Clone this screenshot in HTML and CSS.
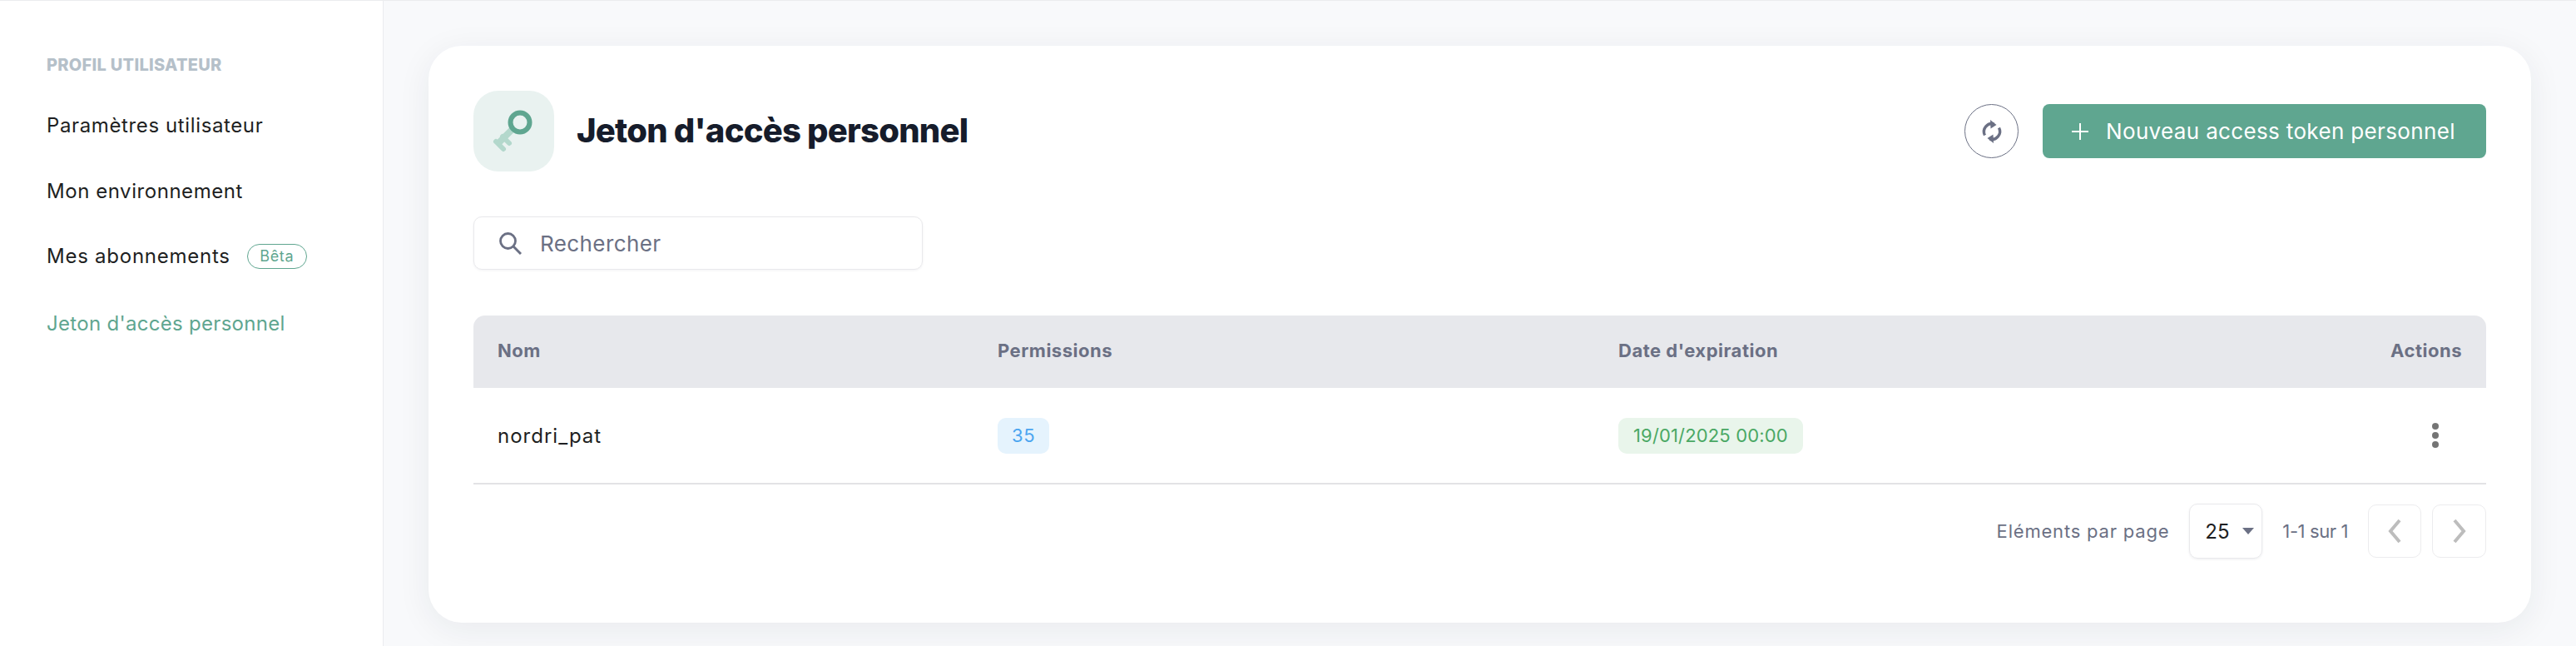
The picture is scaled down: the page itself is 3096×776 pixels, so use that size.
FILE: index.html
```html
<!DOCTYPE html>
<html lang="fr">
<head>
<meta charset="utf-8">
<title>Jeton d'accès personnel</title>
<link rel="stylesheet" href="styles.css">
</head>
<body>
<div class="app">
  <aside class="sidebar">
    <div class="side-title">PROFIL UTILISATEUR</div>
    <nav class="side-nav">
      <a class="nav-item nav-a">Paramètres utilisateur</a>
      <a class="nav-item nav-b">Mon environnement</a>
      <a class="nav-item nav-c">Mes abonnements <span class="beta">Bêta</span></a>
      <a class="nav-item nav-d active">Jeton d'accès personnel</a>
    </nav>
  </aside>
  <main class="main">
    <section class="card">
      <header class="head">
        <div class="head-left">
          <div class="key-box">
            <svg width="97" height="97" viewBox="0 0 97 97" fill="none">
              <path d="M47 46 L29 64" stroke="#b3d8cc" stroke-width="8"/>
              <path d="M28 60 L37 69 M36 54 L44 62" stroke="#b3d8cc" stroke-width="6" stroke-linecap="round" transform="translate(-1 1)"/>
              <circle cx="56" cy="38" r="11.5" stroke="#5fa690" stroke-width="6"/>
            </svg>
          </div>
          <h1 class="title">Jeton d'accès personnel</h1>
        </div>
        <div class="head-right">
          <button class="refresh" aria-label="Rafraîchir">
            <svg width="30" height="30" viewBox="0 0 30 30" fill="none">
              <path d="M6.5 19.5 A9.5 9.5 0 0 1 17.5 6" stroke="#6b7084" stroke-width="3.4"/>
              <path d="M13 1 L20.5 7 L13.5 11.5 Z" fill="#6b7084"/>
              <path d="M23.5 10.5 A9.5 9.5 0 0 1 12.5 24" stroke="#6b7084" stroke-width="3.4"/>
              <path d="M17 29 L9.5 23 L16.5 18.5 Z" fill="#6b7084"/>
            </svg>
          </button>
          <button class="primary">
            <svg width="20" height="20" viewBox="0 0 20 20"><path d="M10 0V20M0 10H20" stroke="#fff" stroke-width="2"/></svg>
            <span>Nouveau access token personnel</span>
          </button>
        </div>
      </header>

      <div class="search">
        <svg width="28" height="28" viewBox="0 0 28 28" fill="none">
          <circle cx="11.5" cy="11.5" r="9" stroke="#6b7084" stroke-width="2.8"/>
          <path d="M18 18 L27 27" stroke="#6b7084" stroke-width="3"/>
        </svg>
        <span class="search-text">Rechercher</span>
      </div>

      <div class="table">
        <div class="thead">
          <div class="th">Nom</div>
          <div class="th">Permissions</div>
          <div class="th">Date d'expiration</div>
          <div class="th th-right">Actions</div>
        </div>
        <div class="trow">
          <div class="name">nordri_pat</div>
          <div><span class="chip chip-blue">35</span></div>
          <div><span class="chip chip-green">19/01/2025 00:00</span></div>
          <div class="cell-right">
            <svg width="10" height="32" viewBox="0 0 10 32" fill="#757575"><circle cx="5" cy="5" r="4"/><circle cx="5" cy="16" r="4"/><circle cx="5" cy="27" r="4"/></svg>
          </div>
        </div>
      </div>

      <footer class="pager">
        <span class="pager-label">Eléments par page</span>
        <div class="select"><span class="select-val">25</span><i class="caret"></i></div>
        <span class="pager-range">1-1 sur 1</span>
        <button class="page-btn" aria-label="Précédent">
          <svg width="16" height="30" viewBox="0 0 16 30" fill="none"><path d="M14 2 L3 15 L14 28" stroke="#bdbdbd" stroke-width="4"/></svg>
        </button>
        <button class="page-btn" aria-label="Suivant">
          <svg width="16" height="30" viewBox="0 0 16 30" fill="none"><path d="M2 2 L13 15 L2 28" stroke="#bdbdbd" stroke-width="4"/></svg>
        </button>
      </footer>
    </section>
  </main>
</div>
</body>
</html>
```
FILE: styles.css
```css
* { box-sizing: border-box; }
html, body { margin: 0; padding: 0; height: 100%; }
body {
  font-family: "Inter", "Liberation Sans", sans-serif;
  background: #f8f9fb;
  overflow: hidden;
}
.app {
  display: flex;
  height: 776px;
  border-top: 1px solid #ebecee;
}
.sidebar {
  width: 461px;
  flex: none;
  background: #fff;
  border-right: 1px solid #ebecef;
  padding: 63px 0 0 56px;
}
.side-title {
  font-size: 20px;
  line-height: 28px;
  font-weight: 800;
  color: #b5c0c9;
  letter-spacing: 0.28px;
}
.side-nav { display: flex; flex-direction: column; margin-top: 44px; }
.nav-item {
  font-size: 24px;
  line-height: 30px;
  color: #1e1f22;
  display: flex;
  align-items: center;
}
.nav-a { letter-spacing: 0.62px; }
.nav-b { letter-spacing: 0.55px; margin-top: 49px; }
.nav-c { letter-spacing: 0.75px; margin-top: 48px; }
.nav-d { letter-spacing: 0.3px; margin-top: 51px; }
.active { color: #5fa690; }
.beta {
  margin-left: 20px;
  width: 72px;
  height: 30px;
  border: 1px solid #5fa690;
  border-radius: 15px;
  color: #5fa690;
  font-size: 18px;
  letter-spacing: 0.6px;
  display: flex;
  align-items: center;
  justify-content: center;
}
.main { flex: 1; padding: 54px 54px 0 54px; min-width: 0; }
.card {
  background: #fff;
  border-radius: 40px;
  height: 693px;
  padding: 54px 54px 0;
  box-shadow: 0 8px 40px rgba(30, 40, 60, 0.07);
}
.head { display: flex; justify-content: space-between; align-items: center; }
.head-left { display: flex; align-items: center; gap: 27px; }
.key-box {
  width: 97px;
  height: 97px;
  border-radius: 30px;
  background: #e9f2f0;
  display: flex;
}
.title {
  margin: 0 0 2px;
  font-size: 40px;
  line-height: 48px;
  font-weight: 800;
  color: #161c2b;
  letter-spacing: -0.78px;
}
.head-right { display: flex; align-items: center; gap: 29px; }
.refresh {
  width: 65px;
  height: 65px;
  padding: 0;
  border: 1px solid #6b7084;
  border-radius: 50%;
  background: #fff;
  display: flex;
  align-items: center;
  justify-content: center;
}
.primary {
  width: 533px;
  height: 65px;
  border: 0;
  border-radius: 8px;
  background: #5fa690;
  color: #fff;
  font: inherit;
  font-size: 26px;
  letter-spacing: 0.35px;
  display: flex;
  align-items: center;
  padding: 0 0 0 35px;
  gap: 21px;
}
.search {
  margin-top: 54px;
  width: 540px;
  height: 64px;
  border: 1px solid #e9e9ec;
  border-radius: 10px;
  box-shadow: 0 1px 3px rgba(30, 40, 60, 0.06);
  display: flex;
  align-items: center;
  padding-left: 29px;
  gap: 22px;
}
.search-text { font-size: 26px; color: #6b7084; letter-spacing: 0.4px; }
.table { margin-top: 55px; }
.thead, .trow {
  display: grid;
  grid-template-columns: 601px 746px 1fr 200px;
  align-items: center;
}
.thead {
  height: 87px;
  background: #e7e8ec;
  border-radius: 14px 14px 0 0;
  padding: 0 29px;
}
.th { font-size: 22px; font-weight: 700; color: #6b7084; letter-spacing: 0.5px; margin-top: -4px; }
.th-right, .cell-right { text-align: right; }
.trow {
  height: 116px;
  border-bottom: 2px solid #e3e3e5;
  padding: 0 29px;
}
.name { font-size: 24px; color: #1e1f22; letter-spacing: 1px; }
.chip {
  display: inline-flex;
  align-items: center;
  height: 43px;
  border-radius: 10px;
  font-size: 22px;
}
.chip-blue { background: #e5f3fd; color: #4ba5f0; padding: 0 17px; letter-spacing: 0.6px; }
.chip-green { background: #e9f5eb; color: #4aa864; padding: 0 18px; letter-spacing: 0.15px; }
.cell-right svg { display: block; margin-left: auto; margin-right: 27px; }
.pager {
  display: flex;
  justify-content: flex-end;
  align-items: center;
  margin-top: 23px;
}
.pager-label { font-size: 22px; color: #6b7084; letter-spacing: 0.8px; }
.select {
  margin-left: 24px;
  width: 88px;
  height: 66px;
  border: 1px solid #e9e9ec;
  border-radius: 10px;
  box-shadow: 0 1px 3px rgba(30, 40, 60, 0.08);
  display: flex;
  align-items: center;
  padding-left: 18px;
}
.select-val { font-size: 24px; color: #1e1f22; }
.caret {
  margin-left: 15px;
  width: 0;
  height: 0;
  border-left: 7px solid transparent;
  border-right: 7px solid transparent;
  border-top: 8px solid #6b7084;
}
.pager-range { margin-left: 24px; margin-right: 24px; font-size: 22px; color: #6b7084; letter-spacing: -0.4px; }
.page-btn {
  width: 65px;
  height: 64px;
  margin-left: 13px;
  padding: 0;
  background: #fff;
  border: 1px solid #ececee;
  border-radius: 10px;
  display: flex;
  align-items: center;
  justify-content: center;
}
.pager-range + .page-btn { margin-left: 0; width: 64px; }
```
